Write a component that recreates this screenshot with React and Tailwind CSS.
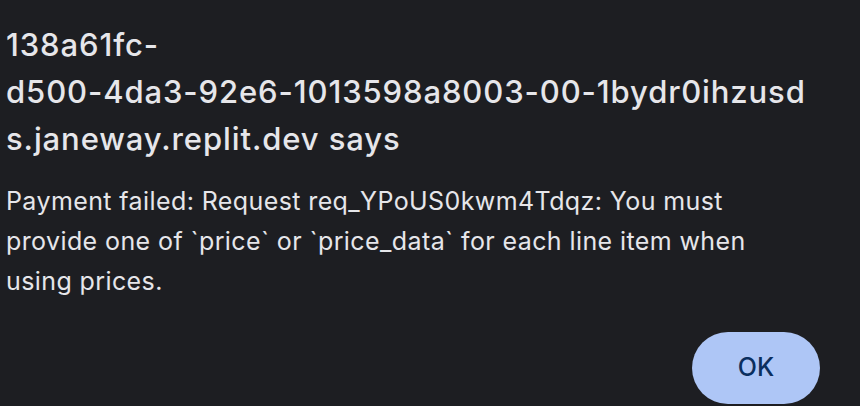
import React from 'react';

function App() {
  return (
    <div className="w-[860px] h-[406px] overflow-hidden bg-[#1d1e22] text-[#e6e6ea] font-['Inter','Liberation_Sans',sans-serif]">
      <div className="pt-[21px] pl-[6px] pr-[20px]">
        <h1 className="text-[31px] leading-[47px] font-medium tracking-[0.9px]">
          <span className="block">138a61fc-</span>
          <span className="block">d500-4da3-92e6-1013598a8003-00-1bydr0ihzusd</span>
          <span className="block">s.janeway.replit.dev says</span>
        </h1>
        <p className="mt-[19px] text-[25px] leading-[40px] tracking-[0.4px]">
          Payment failed: Request req_YPoUS0kwm4Tdqz: You must
          <br />
          provide one of `price` or `price_data` for each line item when
          <br />
          using prices.
        </p>
        <div className="flex justify-end mt-[31px] pr-[20px]">
          <button type="button" className="w-[128px] h-[72px] rounded-full bg-[#aec6f6] text-[#0b2f5e] text-[25px] font-medium">
            OK
          </button>
        </div>
      </div>
    </div>
  );
}

export default App;
